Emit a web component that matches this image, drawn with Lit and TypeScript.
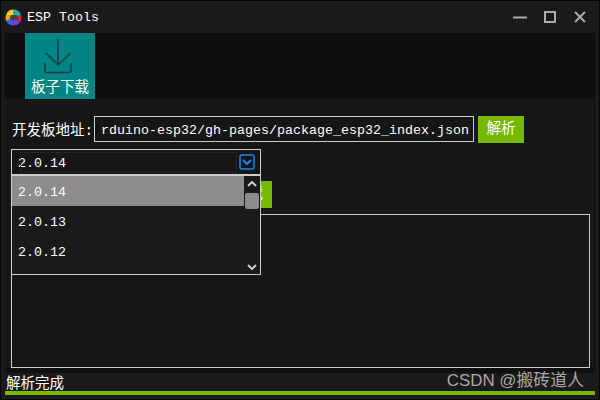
import { LitElement, html, css } from 'lit';
import { customElement } from 'lit/decorators.js';

const versions = ['2.0.14', '2.0.13', '2.0.12'];

@customElement('app-root')
export class AppRoot extends LitElement {
  static styles = css`
    :host {
      display: block;
      width: 600px;
      height: 400px;
      font-family: 'Liberation Mono', 'Noto Sans CJK SC', monospace;
      font-size: 13.33px;
      color: #fff;
    }
    .window {
      position: relative;
      box-sizing: border-box;
      width: 600px;
      height: 400px;
      background: #1a1a1a;
      border: 1px solid #050505;
      display: flex;
      flex-direction: column;
    }
    .titlebar {
      height: 32px;
      flex: none;
      display: flex;
      align-items: center;
      padding: 0 12px 0 4px;
      gap: 5px;
    }
    .title { flex: 1; padding-top: 1px; }
    .ctrl { display: block; margin-left: 11px; }
    .body {
      flex: 1;
      margin: 0 4px;
      display: flex;
      flex-direction: column;
      min-height: 0;
    }
    .toolbar {
      height: 66px;
      flex: none;
      background: #0f0f0f;
      padding-left: 20px;
    }
    .tool {
      width: 70px;
      height: 66px;
      background: #008484;
      display: flex;
      flex-direction: column;
      align-items: center;
      font-size: 14.5px;
      line-height: 20px;
    }
    .tool svg { display: block; margin: 5px 2px 4px 0; }
    .main {
      flex: 1;
      background: #161616;
      padding: 17px 4px 0 6px;
      display: flex;
      flex-direction: column;
      min-height: 0;
      border-right: 1px solid #0f0f0f;
      border-bottom: 5px solid #0f0f0f;
    }
    .row { display: flex; align-items: flex-start; height: 33px; flex: none; }
    .label { font-size: 14.5px; line-height: 30px; width: 82px; margin-left: 1px; white-space: nowrap; }
    .input {
      box-sizing: border-box;
      width: 380px;
      height: 26px;
      line-height: 28px;
      border: 1px solid #ccc;
      padding-right: 4px;
      display: flex;
      justify-content: flex-end;
      white-space: nowrap;
    }
    .btn {
      background: #77b900;
      margin-left: 4px;
      width: 46px;
      height: 27px;
      line-height: 27px;
      text-align: center;
      font-size: 14.5px;
    }
    .combo {
      position: relative;
      box-sizing: border-box;
      width: 250px;
      height: 26px;
      flex: none;
      border: 1px solid #ccc;
      display: flex;
      align-items: center;
      padding: 0 5px 0 6px;
      justify-content: space-between;
    }
    .ver { margin-top: 3px; }
    .focus {
      position: absolute;
      left: 8px;
      top: 2px;
      width: 215px;
      height: 19px;
      border: 1px dotted #333;
    }
    .combo svg { display: block; }
    .gap { height: 6px; flex: none; }
    .go {
      box-sizing: border-box;
      width: 261px;
      height: 27px;
      line-height: 27px;
      flex: none;
      background: #77b900;
      text-align: right;
      padding-right: 9px;
      font-size: 14.5px;
    }
    .log {
      flex: 1;
      margin-top: 6px;
      border: 1px solid #ccc;
      min-height: 0;
    }
    .status {
      height: 18px;
      flex: none;
      font-size: 14.5px;
      line-height: 23px;
      padding-left: 1px;
    }
    .bar { height: 4px; flex: none; background: #77b900; margin-bottom: 4px; }
    .dropdown {
      position: absolute;
      left: 10px;
      top: 174px;
      width: 250px;
      height: 100px;
      box-sizing: border-box;
      border: 1px solid #ccc;
      background: #1a1a1a;
      display: flex;
    }
    .items { flex: 1; }
    .item { height: 30px; line-height: 33px; padding-left: 6px; }
    .item.sel { background: #8c8c8c; }
    .scroll {
      width: 16px;
      flex: none;
      display: flex;
      flex-direction: column;
      align-items: center;
      padding-top: 5px;
    }
    .thumb { width: 14px; height: 16px; background: #8c8c8c; border-radius: 2px; margin-top: 6px; }
    .scroll svg { display: block; }
    .scroll .dn { margin-top: auto; margin-bottom: 4px; }
    .mark {
      position: absolute;
      right: 15px;
      bottom: 8px;
      font-family: 'Liberation Sans', 'Noto Sans CJK SC', sans-serif;
      font-size: 16.9px;
      line-height: 20px;
      color: #a8a8a8;
    }
  `;

  render() {
    return html`
      <div class="window">
        <div class="titlebar">
          <svg width="17" height="17" viewBox="0 0 17 17">
            <path d="M8.5 8.5L8.5 .5A8 8 0 0 1 16 6Z" fill="#20b0b0"/>
            <path d="M8.5 8.5L16 6A8 8 0 0 1 15 13.5Z" fill="#d81e50"/>
            <path d="M8.5 8.5L15 13.5A8 8 0 0 1 8 16.5Z" fill="#8a30e0"/>
            <path d="M8.5 8.5L8 16.5A8 8 0 0 1 1.2 12Z" fill="#3c60f0"/>
            <path d="M8.5 8.5L1.2 12A8 8 0 0 1 1.2 5.5Z" fill="#f0a020"/>
            <path d="M8.5 8.5L1.2 5.5A8 8 0 0 1 8.5 .5Z" fill="#e8d030"/>
            <rect x="5" y="6" width="8" height="5" rx="2" fill="#444"/>
          </svg>
          <span class="title">ESP Tools</span>
          <svg class="ctrl" width="14" height="14" viewBox="0 0 14 14"><path d="M0 7.5H14" stroke="#aaa" stroke-width="2"/></svg>
          <svg class="ctrl" width="14" height="14" viewBox="0 0 14 14"><rect x="2" y="2" width="10" height="10" fill="none" stroke="#aaa" stroke-width="2"/></svg>
          <svg class="ctrl" width="14" height="14" viewBox="0 0 14 14"><path d="M2 2L12 12M12 2L2 12" stroke="#aaa" stroke-width="2"/></svg>
        </div>
        <div class="body">
          <div class="toolbar">
            <div class="tool">
              <svg width="32" height="36" viewBox="0 0 32 36">
                <path d="M15 1V27M3 15L15 27L27.5 15M2 25V32.5Q2 34.5 4 34.5H26Q28 34.5 28 32.5V25" fill="none" stroke="#1f3d4d" stroke-width="1.6"/>
              </svg>
              <span>板子下载</span>
            </div>
          </div>
          <div class="main">
            <div class="row">
              <span class="label">开发板地址:</span>
              <div class="input"><span>rduino-esp32/gh-pages/package_esp32_index.json</span></div>
              <div class="btn">解析</div>
            </div>
            <div class="combo">
              <div class="focus"></div>
              <span class="ver">2.0.14</span>
              <svg width="16" height="16" viewBox="0 0 16 16">
                <rect x="1" y="1" width="14" height="14" rx="2" fill="none" stroke="#1787f0" stroke-width="1.5"/>
                <path d="M4 6L8 10L12 6" fill="none" stroke="#1787f0" stroke-width="2"/>
              </svg>
            </div>
            <div class="gap"></div>
            <div class="go">下载</div>
            <div class="log"></div>
          </div>
          <div class="status">解析完成</div>
          <div class="bar"></div>
        </div>
        <div class="dropdown">
          <div class="items">
            ${versions.map((v, i) => html`<div class="item ${i === 0 ? 'sel' : ''}">${v}</div>`)}
          </div>
          <div class="scroll">
            <svg width="10" height="6" viewBox="0 0 10 6"><path d="M1 5L5 1L9 5" fill="none" stroke="#ccc" stroke-width="2"/></svg>
            <div class="thumb"></div>
            <svg class="dn" width="10" height="6" viewBox="0 0 10 6"><path d="M1 1L5 5L9 1" fill="none" stroke="#ccc" stroke-width="2"/></svg>
          </div>
        </div>
        <div class="mark">CSDN @搬砖道人</div>
      </div>
    `;
  }
}
